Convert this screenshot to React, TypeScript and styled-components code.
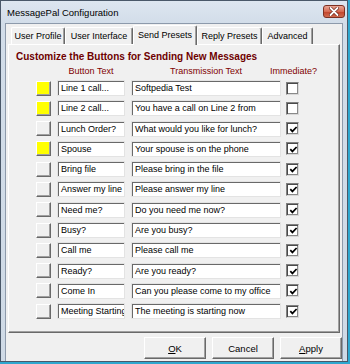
import React from 'react'
import styled, { createGlobalStyle } from 'styled-components'

const presets = [
  { label: 'Line 1 call...', text: 'Softpedia Test', lit: true, now: false },
  { label: 'Line 2 call...', text: 'You have a call on Line 2 from', lit: true, now: false },
  { label: 'Lunch Order?', text: 'What would you like for lunch?', lit: false, now: true },
  { label: 'Spouse', text: 'Your spouse is on the phone', lit: true, now: true },
  { label: 'Bring file', text: 'Please bring in the file', lit: false, now: true },
  { label: 'Answer my line', text: 'Please answer my line', lit: false, now: true },
  { label: 'Need me?', text: 'Do you need me now?', lit: false, now: true },
  { label: 'Busy?', text: 'Are you busy?', lit: false, now: true },
  { label: 'Call me', text: 'Please call me', lit: false, now: true },
  { label: 'Ready?', text: 'Are you ready?', lit: false, now: true },
  { label: 'Come In', text: 'Can you please come to my office', lit: false, now: true },
  { label: 'Meeting Starting', text: 'The meeting is starting now', lit: false, now: true },
]

const tabs = [
  { name: 'User Profile', w: 54 },
  { name: 'User Interface', w: 68 },
  { name: 'Send Presets', w: 64, active: true },
  { name: 'Reply Presets', w: 65 },
  { name: 'Advanced', w: 51 },
]

const App = () => {
  return (
    <>
      <GlobalStyle />
      <Window>
        <TitleBar>
          <span>MessagePal Configuration</span>
          <CloseButton>
            <svg width="10" height="9" viewBox="0 0 10 9">
              <path d="M1.5 1 L8.5 8 M8.5 1 L1.5 8" stroke="#6b2418" strokeWidth="3.2" strokeLinecap="round" />
              <path d="M1.5 1 L8.5 8 M8.5 1 L1.5 8" stroke="#fff" strokeWidth="1.8" strokeLinecap="round" />
            </svg>
          </CloseButton>
        </TitleBar>
        <Client>
          <TabStrip>
            {tabs.map((t) => (
              <Tab key={t.name} $w={t.w} $active={!!t.active}>
                {t.name}
              </Tab>
            ))}
          </TabStrip>
          <Panel>
            <Heading>Customize the Buttons for Sending New Messages</Heading>
            <HeaderGrid>
              <span />
              <ColumnTitle>Button Text</ColumnTitle>
              <ColumnTitle>Transmission Text</ColumnTitle>
              <ColumnTitle>Immediate?</ColumnTitle>
            </HeaderGrid>
            <PresetGrid>
              {presets.map((p, i) => (
                <React.Fragment key={i}>
                  <Swatch $lit={p.lit} />
                  <Field>{p.label}</Field>
                  <Field>{p.text}</Field>
                  <Check>
                    {p.now && (
                      <svg width="9" height="9" viewBox="0 0 9 9">
                        <polyline points="1.3,4.2 3.4,6.4 7.6,2" fill="none" stroke="#000" strokeWidth="1.7" />
                      </svg>
                    )}
                  </Check>
                </React.Fragment>
              ))}
            </PresetGrid>
          </Panel>
          <Footer>
            <DialogButton>
              <u>O</u>K
            </DialogButton>
            <DialogButton>Cancel</DialogButton>
            <DialogButton>
              <u>A</u>pply
            </DialogButton>
          </Footer>
        </Client>
      </Window>
    </>
  )
}

export default App

const GlobalStyle = createGlobalStyle`
  html, body {
    margin: 0;
    padding: 0;
    background: #2ea7cf;
  }
  body {
    font-family: "Liberation Sans", Arial, sans-serif;
    font-size: 9px;
    color: #000;
  }
`

const Window = styled.div`
  width: 348px;
  height: 362px;
  box-sizing: border-box;
  border: 1px solid #4a5869;
  background: linear-gradient(#dde6f0, #d2dde9 22px, #cfdae6);
  display: flex;
  flex-direction: column;
`

const TitleBar = styled.div`
  height: 22px;
  flex: none;
  display: flex;
  align-items: center;
  justify-content: space-between;
  padding: 0 2px 0 6px;
  font-size: 9.5px;
`

const CloseButton = styled.div`
  width: 22px;
  height: 13px;
  box-sizing: border-box;
  margin-top: -2px;
  border: 1px solid #7d3022;
  border-radius: 3px;
  background: linear-gradient(#e9a695, #d66a52 50%, #c1422a 51%, #cf6a4e);
  display: flex;
  align-items: center;
  justify-content: center;
`

const Client = styled.div`
  flex: 1;
  margin: 0 4px;
  border: 1px solid #8d9aab;
  border-bottom: none;
  background: #f0f0f0;
  display: flex;
  flex-direction: column;
`

const TabStrip = styled.div`
  height: 21px;
  display: flex;
  align-items: flex-end;
  padding-left: 3px;
  margin: 0 2px -1px;
  position: relative;
  z-index: 1;
`

const Tab = styled.div<{ $w: number; $active: boolean }>`
  width: ${(p) => p.$w}px;
  height: ${(p) => (p.$active ? 20 : 17)}px;
  margin-bottom: ${(p) => (p.$active ? 0 : 1)}px;
  box-sizing: border-box;
  border-top: 1px solid #fff;
  border-left: 1px solid #fff;
  border-right: 1px solid #696969;
  box-shadow: inset -1px 0 #a0a0a0;
  border-radius: 2px 2px 0 0;
  background: #f0f0f0;
  display: flex;
  justify-content: center;
  padding-top: ${(p) => (p.$active ? 4 : 3)}px;
  white-space: nowrap;
`

const Panel = styled.div`
  height: 289px;
  box-sizing: border-box;
  margin: 0 2px;
  border-top: 1px solid #fff;
  border-left: 1px solid #fff;
  border-right: 1px solid #696969;
  border-bottom: 1px solid #696969;
  box-shadow: inset -1px -1px #a0a0a0;
  padding: 6px 0 0 7px;
`

const Heading = styled.div`
  font-size: 10px;
  line-height: 12px;
  font-weight: bold;
  color: #6e0000;
`

const columns = `
  display: grid;
  grid-template-columns: 15px 68px 150px 13px;
  column-gap: 6px;
  margin-left: 20px;
`

const HeaderGrid = styled.div`
  ${columns}
  margin-top: 3px;
  height: 11px;
`

const ColumnTitle = styled.span`
  justify-self: center;
  white-space: nowrap;
  line-height: 11px;
  color: #800000;
`

const PresetGrid = styled.div`
  ${columns}
  margin-top: 3px;
  grid-auto-rows: 16px;
  row-gap: 4.3px;
  align-items: center;
`

const Swatch = styled.div<{ $lit: boolean }>`
  width: 15px;
  height: 15px;
  box-sizing: border-box;
  border-top: 1px solid #fff;
  border-left: 1px solid #fff;
  border-right: 1px solid #696969;
  border-bottom: 1px solid #696969;
  box-shadow: inset -1px -1px #a0a0a0;
  background: ${(p) => (p.$lit ? '#ffff00' : '#f0f0f0')};
`

const Field = styled.div`
  height: 16px;
  box-sizing: border-box;
  border-top: 1px solid #a0a0a0;
  border-left: 1px solid #a0a0a0;
  border-right: 1px solid #fff;
  border-bottom: 1px solid #fff;
  box-shadow: inset 1px 1px #696969;
  outline: 1px solid #e3e3e3;
  outline-offset: -1px;
  background: #fff;
  padding: 1px 0 0 3px;
  line-height: 13px;
  white-space: nowrap;
  overflow: hidden;
`

const Check = styled.div`
  width: 13px;
  height: 13px;
  margin-left: -1px;
  box-sizing: border-box;
  border: 1px solid #808080;
  border-right-color: #d8d8d8;
  border-bottom-color: #d8d8d8;
  box-shadow: inset 1px 1px #4a4a4a, inset -1px -1px #8a8a8a;
  background: #fff;
  display: flex;
  align-items: center;
  justify-content: center;
  padding: 1px 0 0 1px;
`

const Footer = styled.div`
  display: flex;
  justify-content: flex-end;
  gap: 6px;
  margin-top: 4px;
`

const DialogButton = styled.div`
  width: 62px;
  height: 22px;
  box-sizing: border-box;
  border-top: 1px solid #fff;
  border-left: 1px solid #fff;
  border-right: 1px solid #696969;
  border-bottom: 1px solid #696969;
  box-shadow: inset -1px -1px #a0a0a0;
  background: #f0f0f0;
  display: flex;
  align-items: center;
  justify-content: center;
  font-size: 9.5px;
  u {
    text-decoration-thickness: 1px;
    text-underline-offset: 1px;
  }
`
